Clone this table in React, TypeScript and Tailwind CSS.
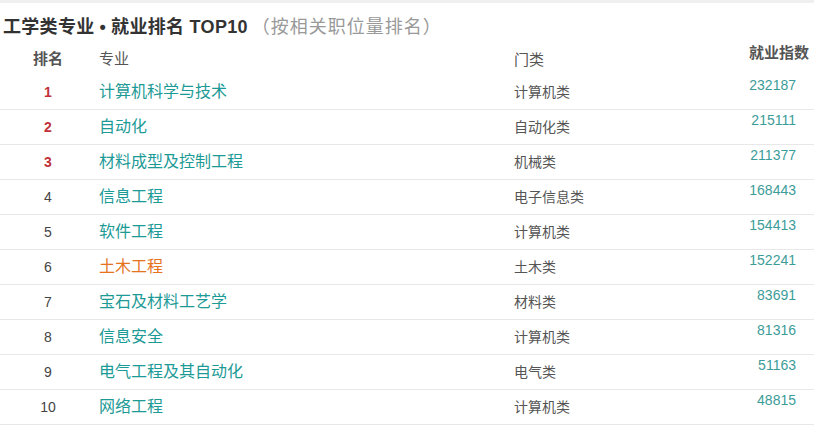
const rows = [
  { rank: 1, name: '计算机科学与技术', cat: '计算机类', idx: '232187' },
  { rank: 2, name: '自动化', cat: '自动化类', idx: '215111' },
  { rank: 3, name: '材料成型及控制工程', cat: '机械类', idx: '211377' },
  { rank: 4, name: '信息工程', cat: '电子信息类', idx: '168443' },
  { rank: 5, name: '软件工程', cat: '计算机类', idx: '154413' },
  { rank: 6, name: '土木工程', cat: '土木类', idx: '152241', hot: true },
  { rank: 7, name: '宝石及材料工艺学', cat: '材料类', idx: '83691' },
  { rank: 8, name: '信息安全', cat: '计算机类', idx: '81316' },
  { rank: 9, name: '电气工程及其自动化', cat: '电气类', idx: '51163' },
  { rank: 10, name: '网络工程', cat: '计算机类', idx: '48815' },
];

export default function App() {
  return (
    <div
      className="w-[814px] h-[426px] bg-white overflow-hidden"
      style={{ fontFamily: '"Liberation Sans", "Noto Sans CJK SC", sans-serif' }}
    >
      <div className="h-[3px] bg-[#efefef]" />
      {/* title */}
      <div className="h-[40px] flex items-center pt-[7px] pl-[3px] text-[18px] leading-none">
        <span className="font-bold text-[#333] tracking-[0.3px]">
          工学类专业<span className="mx-[5px]">•</span>就业排名 TOP10
        </span>
        <span className="text-[#999] ml-[4px] tracking-[1px]">（按相关职位量排名）</span>
      </div>

      {/* header */}
      <div className="h-[32px] flex items-center text-[15px] text-[#555]">
        <div className="w-[96px] text-center font-bold">排名</div>
        <div className="w-[418px] pl-[3px]">专业</div>
        <div className="w-[235px] pt-[2px]">门类</div>
        <div className="flex-1 font-bold mb-[12px]">就业指数</div>
      </div>

      {rows.map((r) => (
        <div key={r.rank} className="h-[35px] flex items-center border-b border-[#e8e8e8]">
          <div
            className={
              r.rank <= 3
                ? 'w-[96px] text-center text-[14px] font-bold text-[#c0313a]'
                : 'w-[96px] text-center text-[14px] text-[#444]'
            }
          >
            {r.rank}
          </div>
          <div
            className={
              r.hot
                ? 'w-[418px] pl-[3px] text-[16px] text-[#e5731c]'
                : 'w-[418px] pl-[3px] text-[16px] text-[#1c9a96]'
            }
          >
            {r.name}
          </div>
          <div className="w-[235px] text-[14px] text-[#555]">{r.cat}</div>
          <div className="w-[47px] text-right text-[14px] text-[#3c9c99] mb-[13px]">{r.idx}</div>
        </div>
      ))}
    </div>
  );
}
